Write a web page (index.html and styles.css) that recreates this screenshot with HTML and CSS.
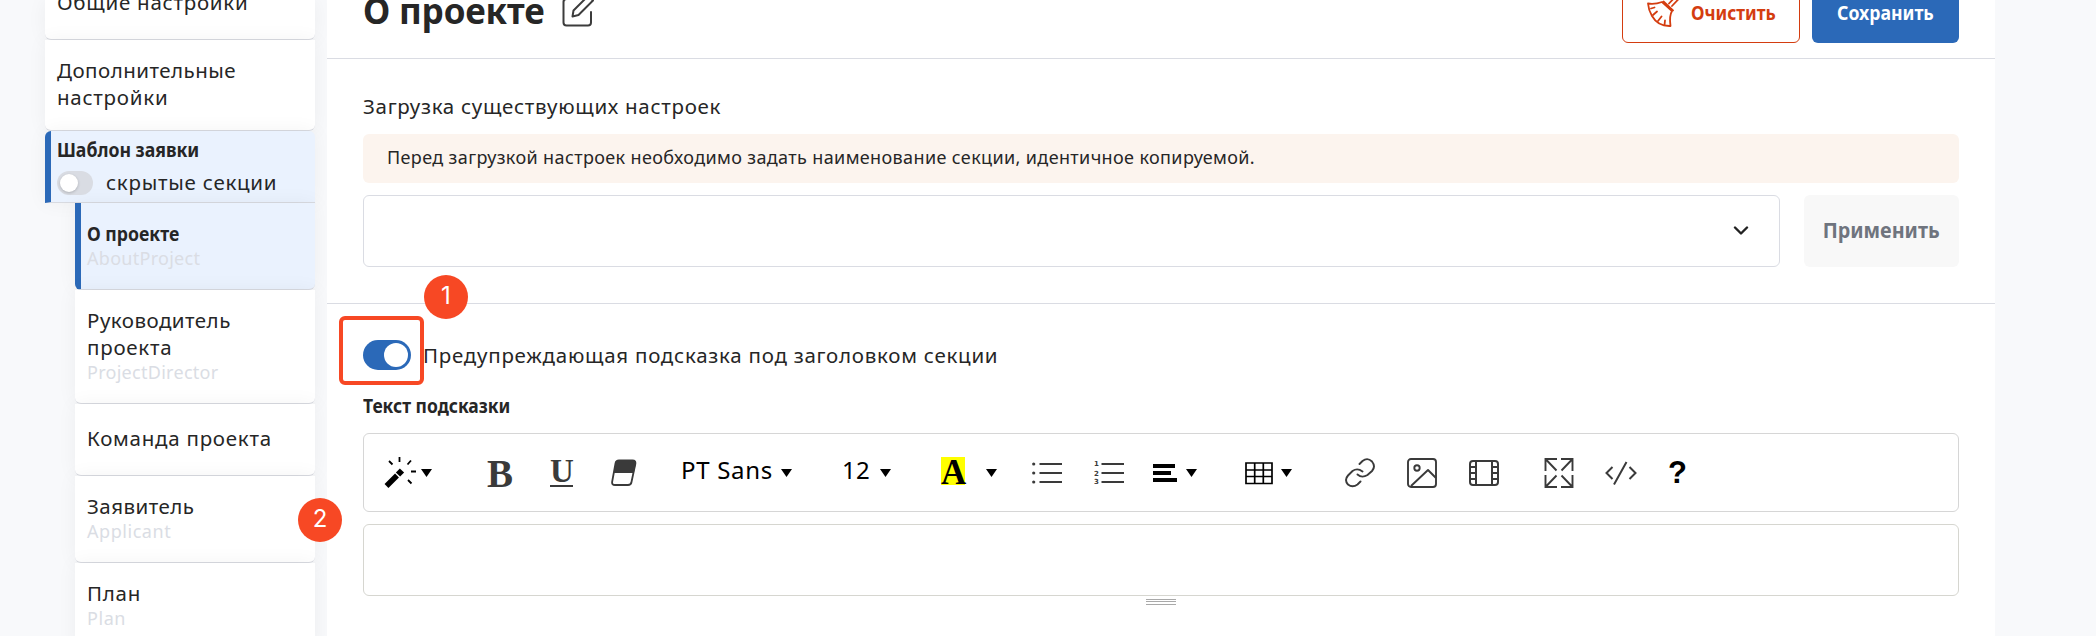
FILE: index.html
```
<!DOCTYPE html>
<html lang="ru">
<head>
<meta charset="utf-8">
<title>О проекте</title>
<link rel="stylesheet" href="styles.css">
</head>
<body>
<div class="page">
  <nav class="sidebar">
    <div class="item item-first">Общие настройки</div>
    <div class="item item-extra"><span class="fit-extra">Дополнительные</span><br>настройки</div>
    <div class="item item-template"><span class="bold">Шаблон заявки</span>
      <div class="hidden-row"><span class="toggle-off"></span><span>скрытые секции</span></div>
    </div>
    <div class="item sub active"><span class="bold">О проекте</span><small class="code">AboutProject</small></div>
    <div class="item sub tall"><span class="fit-extra">Руководитель</span><br>проекта<small class="code">ProjectDirector</small></div>
    <div class="item sub team">Команда проекта</div>
    <div class="item sub"><span class="fit-extra">Заявитель</span><small class="code code-wide">Applicant</small></div>
    <div class="item sub">План<small class="code code-wide">Plan</small></div>
  </nav>

  <main class="main">
    <header class="head">
      <h1 class="title">О проекте</h1>
      <svg class="edit" width="32" height="32" viewBox="0 0 32 32" fill="none" stroke="#3c3c3c" stroke-width="2" stroke-linejoin="round" stroke-linecap="round"><path d="M14 3H4.500Q1.500 3 1.500 6V26.500Q1.500 29.500 4.500 29.500H26Q29 29.500 29 26.500V16"/><path d="M10.500 20.500L11.500 14.500L26 0L31 4.500L16.500 19Z"/></svg>
      <button class="btn btn-clear"><svg width="32" height="34" viewBox="0 0 32 34" fill="none" stroke="#d43d10" stroke-width="1.800" stroke-linejoin="round" stroke-linecap="round"><path d="M1 9.500Q8 10.500 15 8L25 17Q22 22 23.500 32Q11 32.500 5 22Q1.500 16 1 9.500Z"/><path d="M16.500 7.500L26 16.500M22 9.500L32 -1M25 12L34 2.500M6 21L10 17.500M11 27L14.500 22.500M17.500 31L18 26.500M4 14.500L7.500 13.500"/></svg><span class="bold">Очистить</span></button>
      <button class="btn btn-save"><span class="bold">Сохранить</span></button>
    </header>

    <section class="load">
      <div class="label">Загрузка существующих настроек</div>
      <div class="notice">Перед загрузкой настроек необходимо задать наименование секции, идентичное копируемой.</div>
      <div class="load-row">
        <div class="select"><svg width="16" height="10" viewBox="0 0 16 10" fill="none" stroke="#222" stroke-width="2.400" stroke-linecap="round" stroke-linejoin="round"><path d="M2 1.500L8 7.500L14 1.500"/></svg></div>
        <button class="apply"><span class="bold">Применить</span></button>
      </div>
    </section>

    <section class="hint">
      <div class="switch-row">
        <span class="toggle-on"></span><span class="switch-label">Предупреждающая подсказка под заголовком секции</span>
        <span class="frame"></span><span class="pin pin-1">1</span>
      </div>
      <div class="hint-title"><span class="bold">Текст подсказки</span></div>
      <div class="toolbar">
        <svg class="i-wand" width="34" height="32" viewBox="0 0 34 32" fill="none" stroke="#000"><path d="M2.500 30L13 19.500" stroke-width="5.500"/><path d="M14 18.500L18 14.500" stroke-width="6"/><path d="M15.500 1V6M5 5L8.500 8.500M27 4.500L23.500 8.500M27 15.500H32M24 24L27.500 27.500" stroke-width="1.800"/></svg>
        <i class="caret c1"></i>
        <span class="glyph g-b">B</span>
        <span class="glyph g-u">U</span>
        <svg class="i-eraser" width="26" height="32" viewBox="0 0 26 32"><path d="M8 4.500H21.500Q25 4.500 24.300 8L20.500 26Q20 29 17 29H4Q.5 29 1.200 25.500L4.500 7.500Q5 4.500 8 4.500Z" fill="#fff" stroke="#3a3a3a" stroke-width="1.800"/><path d="M8 4H21.500Q25.500 4 24.800 8L22.800 17H2.700L4.500 7Q5 4 8 4Z" fill="#3a3a3a"/></svg>
        <span class="tool-text tx-font">PT Sans</span><i class="caret c2"></i>
        <span class="tool-text tx-size">12</span><i class="caret c3"></i>
        <span class="glyph g-a">A</span><i class="caret c4"></i>
        <svg class="i-ul" width="30" height="32" viewBox="0 0 30 32" fill="#3a3a3a"><circle cx="1.700" cy="8" r="1.600"/><circle cx="1.700" cy="17" r="1.600"/><circle cx="1.700" cy="26" r="1.600"/><path d="M7.500 7H30V9H7.500ZM7.500 16H30V18H7.500ZM7.500 25H30V27H7.500Z"/></svg>
        <svg class="i-ol" width="30" height="32" viewBox="0 0 30 32" fill="#3a3a3a"><path d="M7.500 7H30V9H7.500ZM7.500 16H30V18H7.500ZM7.500 25H30V27H7.500Z"/><text x="0" y="10" class="ol-num">1</text><text x="0" y="19.500" class="ol-num">2</text><text x="0" y="28" class="ol-num">3</text></svg>
        <svg class="i-align" width="24" height="32" viewBox="0 0 24 32"><path d="M0 8H22V12H0ZM0 15H18V19H0ZM0 22H24V26H0Z"/></svg><i class="caret c5"></i>
        <svg class="i-table" width="28" height="32" viewBox="0 0 28 32" fill="none" stroke="#000" stroke-width="1.700"><path d="M1 7H27V27.500H1ZM1 14H27M1 20.500H27M9.700 7V27.500M18.300 7V27.500"/></svg><i class="caret c6"></i>
        <svg class="i-link" width="30" height="32" viewBox="0 0 30 32" fill="none" stroke="#3a3a3a" stroke-width="1.900" stroke-linecap="round"><path d="M14.500 8L17.500 5Q22.500 1 27 5.500Q31 10.500 27 15L22.500 19Q17 22.500 12.500 18.500"/><path d="M17.500 15.500Q12.500 11.500 7.500 15L3 19.500Q-1 24 3 28.500Q7.500 32 12.500 28.500L15.500 25.500"/></svg>
        <svg class="i-image" width="30" height="32" viewBox="0 0 30 32" fill="none" stroke="#3a3a3a" stroke-width="1.900"><rect x="1" y="3" width="28" height="28" rx="3"/><circle cx="10" cy="12" r="2.700"/><path d="M4 30L21 14L29 22" stroke-linejoin="round"/></svg>
        <svg class="i-film" width="30" height="32" viewBox="0 0 30 32" fill="none" stroke="#3a3a3a" stroke-width="2"><rect x="1" y="5" width="28" height="24" rx="3"/><path d="M7 5V29M23 5V29M1 11H7M1 17H7M1 23H7M23 11H29M23 17H29M23 23H29"/></svg>
        <svg class="i-full" width="30" height="32" viewBox="0 0 30 32" fill="none" stroke="#3a3a3a" stroke-width="1.900"><path d="M13 3H1.500V15M17 3H28.500V15M13 31H1.500V19M17 31H28.500V19M1.500 3L12.500 14.500M28.500 3L17.500 14.500M1.500 31L12.500 19.500M28.500 31L17.500 19.500"/></svg>
        <svg class="i-code" width="32" height="32" viewBox="0 0 32 32" fill="none" stroke="#3a3a3a" stroke-width="2"><path d="M7.500 11L1.500 17L7.500 23M24.500 11L30.500 17L24.500 23M21.500 6L9 28.500"/></svg>
        <span class="glyph g-q">?</span>
      </div>
      <div class="editor"></div>
      <div class="grip"></div>
    </section>
  </main>
  <span class="pin pin-2">2</span>
</div>
</body>
</html>
```
FILE: styles.css
```
* { box-sizing: border-box; }
body { margin: 0; background: #f8f9fb; color: #262626; font: 20.5px/27px "Noto Sans", "Open Sans", sans-serif; letter-spacing: .75px; overflow: hidden; }
button { font: inherit; color: inherit; letter-spacing: inherit; border: 0; padding: 0; }
.page { position: relative; display: flex; width: 2096px; height: 636px; overflow: hidden; }
.sidebar { width: 327px; padding-left: 45px; flex: none; }
.item { width: 270px; background: #fff; padding: 17px 12px 0; height: 87px; border-bottom: 1px solid #d8dae0; border-radius: 0 0 6px 6px; box-shadow: 0 0 20px rgba(0,0,0,.05); white-space: nowrap; }
.item-first { height: 40px; padding-top: 0; line-height: 5px; }
.item-extra { height: 91px; }
.item-template { height: 72px; background: #eaf2fe; border-left: 6px solid #2b69b8; padding: 5px 6px 0; border-radius: 6px 6px 0 0; }
.sub { width: 240px; margin-left: 30px; padding-left: 12px; }
.sub.active { background: #eaf2fe; border-left: 6px solid #2b69b8; padding-left: 6px; }
.sub.tall { height: 114px; }
.sub.team { height: 72px; padding-top: 21px; }
.fit-extra { letter-spacing: .48px; }
.bold { display: inline-block; font-size: 19.5px; font-weight: 700; letter-spacing: 0; transform: scaleX(.906); transform-origin: left; }
.code { display: block; font-size: 18px; line-height: 22px; color: #dadde4; letter-spacing: .28px; }
.code-wide { letter-spacing: .55px; }
.hidden-row { display: flex; align-items: center; gap: 13px; margin-top: 6px; }
.toggle-off { width: 36px; height: 24px; border-radius: 12px; background: #d9dce3; padding: 3px; }
.toggle-off::before { content: ""; display: block; width: 18px; height: 18px; border-radius: 50%; background: #fff; box-shadow: 0 1px 3px rgba(0,0,0,.2); }
.main { width: 1668px; flex: none; background: #fff; }
.head { height: 59px; border-bottom: 1px solid #dadce3; padding: 0 36px; display: flex; align-items: flex-start; }
.title { margin: -13px 0 0; font-size: 35px; line-height: 48px; width: 199px; letter-spacing: -.15px; white-space: nowrap; }
.edit { margin-top: -4px; flex: none; }
.btn { height: 60px; margin-top: -17px; border-radius: 6px; display: flex; align-items: center; white-space: nowrap; padding-bottom: 2px; }
.btn-clear { margin-left: auto; width: 178px; border: 1px solid #d43d10; color: #d43d10; background: #fff; padding-left: 24px; gap: 12px; }
.btn-clear svg { margin-top: -2px; }
.btn-clear .bold { transform: scaleX(.89); }
.btn-save { width: 147px; margin-left: 12px; background: #2b69b8; color: #fff; padding-left: 25px; }
.load { padding: 34px 36px 0; height: 245px; border-bottom: 1px solid #dadce3; }
.label { height: 41px; letter-spacing: .7px; }
.notice { height: 49px; background: #fcf4ee; border-radius: 6px; padding: 10px 24px; font-size: 18px; letter-spacing: .37px; }
.load-row { display: flex; gap: 24px; margin-top: 12px; height: 72px; }
.select { flex: 1; border: 1px solid #dadce3; border-radius: 6px; display: flex; align-items: center; justify-content: flex-end; padding-right: 30px; }
.apply { width: 155px; background: #f8f8f8; border-radius: 6px; color: #6f747e; padding-bottom: 2px; }
.apply .bold { font-size: 22px; transform: scaleX(.898); transform-origin: center; }
.hint { padding: 36px 36px 0; }
.switch-row { position: relative; display: flex; align-items: center; height: 30px; }
.toggle-on { width: 48px; height: 30px; border-radius: 15px; background: #2b69b8; padding: 3px 3px 3px 21px; }
.toggle-on::before { content: ""; display: block; width: 24px; height: 24px; border-radius: 50%; background: #fff; }
.switch-label { margin-left: 12px; }
.frame { position: absolute; left: -24px; top: -24px; width: 85px; height: 69px; border: 4px solid #f74824; border-radius: 6px; }
.pin { position: absolute; width: 44px; height: 44px; border-radius: 50%; background: #f74824; color: #fff; font: 24px/42px Inter, sans-serif; letter-spacing: 0; text-align: center; }
.pin-1 { left: 61px; top: -65px; }
.pin-2 { left: 298px; top: 498px; }
.hint-title { margin-top: 22px; height: 41px; }
.hint-title .bold { transform: scaleX(.897); }
.toolbar { height: 79px; border: 1px solid #d6d6d6; border-radius: 6px; display: flex; align-items: flex-start; padding: 22px 0 0 20px; color: #000; }
.toolbar > * { flex: none; }
.caret { width: 11px; height: 8px; margin-top: 13px; background: #000; clip-path: polygon(0 0, 100% 0, 50% 100%); }
.c1 { margin-left: 3px; } .c2, .c3 { margin-left: 0; } .c4 { margin-left: 21px; } .c5 { margin-left: 9px; } .c6 { margin-left: 8px; }
.glyph { font-family: "Liberation Serif", serif; font-weight: 700; letter-spacing: 0; text-align: center; color: #3a3a3a; height: 32px; }
.g-b { width: 26px; margin-left: 55px; font-size: 39px; line-height: 36px; }
.g-u { width: 23px; margin-left: 37px; font-size: 33px; line-height: 30px; height: 31px; border-bottom: 2px solid #3a3a3a; }
.i-eraser { margin-left: 38px; }
.tool-text { font-size: 24px; letter-spacing: .7px; line-height: 28px; white-space: nowrap; }
.tx-font { margin-left: 44px; width: 100px; }
.tx-size { margin-left: 50px; width: 38px; letter-spacing: .3px; }
.g-a { width: 24px; height: 28px; margin: 1px 0 0 50px; background: #ff0; color: #000; font-size: 35px; line-height: 32px; }
.i-ul { margin-left: 35px; } .i-ol { margin-left: 32px; } .i-align { margin-left: 29px; } .i-table { margin-left: 48px; }
.i-link { margin-left: 53px; } .i-image { margin-left: 32px; } .i-film { margin-left: 32px; } .i-full { margin-left: 45px; } .i-code { margin-left: 31px; }
.g-q { margin-left: 31px; width: 19px; font: 700 31px/34px "Liberation Sans", sans-serif; color: #000; }
.ol-num { font: 700 7px "DejaVu Sans", sans-serif; letter-spacing: 0; }
.editor { height: 72px; margin-top: 12px; border: 1px solid #d6d6d0; border-radius: 6px; }
.grip { width: 30px; height: 6px; margin: 3px auto 0; border-top: 1px solid #a9a9a9; border-bottom: 1px solid #a9a9a9; padding-top: 1px; }
.grip::before { content: ""; display: block; height: 1px; background: #a9a9a9; }
```
